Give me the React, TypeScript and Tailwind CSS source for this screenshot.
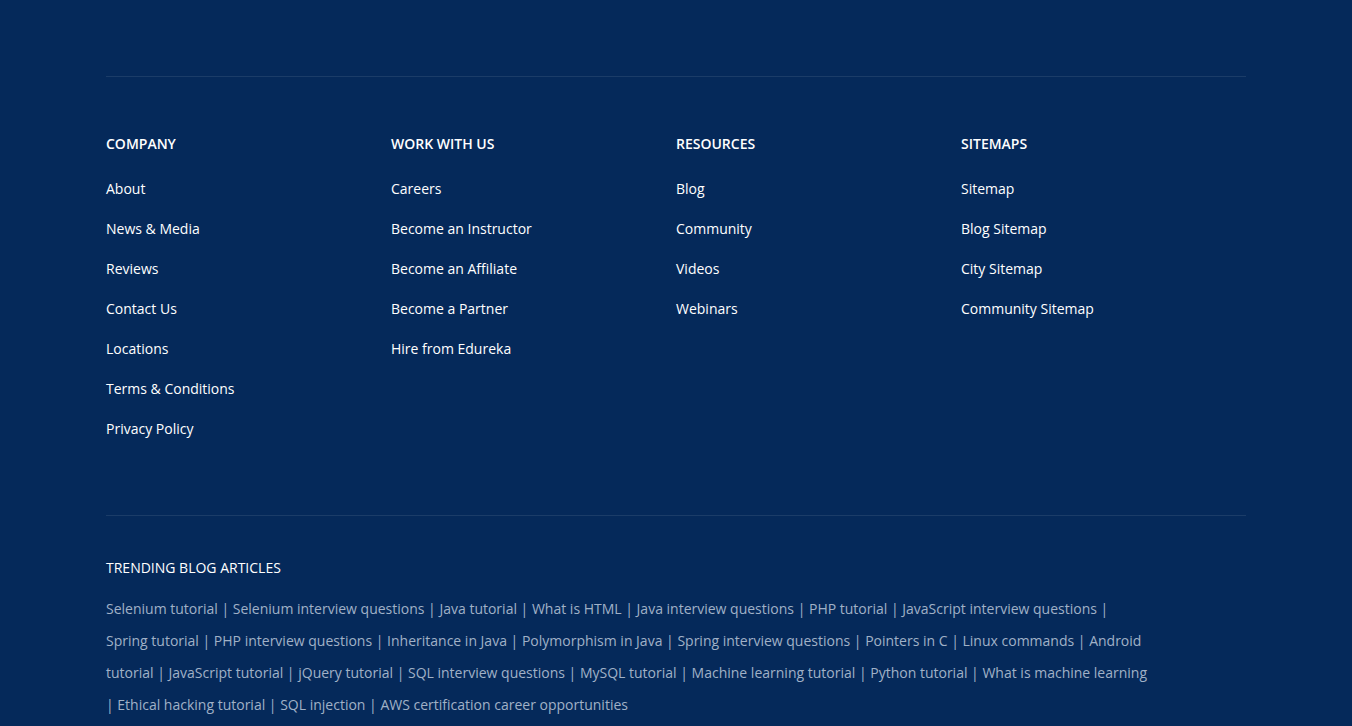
const columns = [
  {
    title: "COMPANY",
    links: ["About", "News & Media", "Reviews", "Contact Us", "Locations", "Terms & Conditions", "Privacy Policy"],
  },
  {
    title: "WORK WITH US",
    links: ["Careers", "Become an Instructor", "Become an Affiliate", "Become a Partner", "Hire from Edureka"],
  },
  {
    title: "RESOURCES",
    links: ["Blog", "Community", "Videos", "Webinars"],
  },
  {
    title: "SITEMAPS",
    links: ["Sitemap", "Blog Sitemap", "City Sitemap", "Community Sitemap"],
  },
];

const articles = [
  "Selenium tutorial",
  "Selenium interview questions",
  "Java tutorial",
  "What is HTML",
  "Java interview questions",
  "PHP tutorial",
  "JavaScript interview questions",
  "Spring tutorial",
  "PHP interview questions",
  "Inheritance in Java",
  "Polymorphism in Java",
  "Spring interview questions",
  "Pointers in C",
  "Linux commands",
  "Android tutorial",
  "JavaScript tutorial",
  "jQuery tutorial",
  "SQL interview questions",
  "MySQL tutorial",
  "Machine learning tutorial",
  "Python tutorial",
  "What is machine learning",
  "Ethical hacking tutorial",
  "SQL injection",
  "AWS certification career opportunities",
];

export default function App() {
  return (
    <footer
      className="min-h-[726px] bg-[#05295a] text-sm text-white"
      style={{ fontFamily: '"Open Sans", "Noto Sans", Arial, sans-serif' }}
    >
      <div className="mx-auto w-[1140px] pt-[76px]">
        {/* колонки ссылок */}
        <div className="grid grid-cols-4 border-t border-[#1b3c68] pt-[57px] pb-[76px]">
          {columns.map((col) => (
            <div key={col.title}>
              <h4 className="text-sm font-semibold leading-5">{col.title}</h4>
              <ul className="mt-[25px] flex flex-col gap-5">
                {col.links.map((l) => (
                  <li key={l}>
                    <a href="#" className="leading-5 text-white">
                      {l}
                    </a>
                  </li>
                ))}
              </ul>
            </div>
          ))}
        </div>

        {/* trending */}
        <div className="border-t border-[#1b3c68] pt-[42px]">
          <h5 className="text-sm leading-5 font-normal">TRENDING BLOG ARTICLES</h5>
          <p className="mt-[15px] w-[1044px] leading-8 text-[#a0b1c7]">
            {articles.map((a, i) => (
              <span key={a}>
                <a href="#">{a}</a>
                {i < articles.length - 1 ? " | " : ""}
              </span>
            ))}
          </p>
        </div>
      </div>
    </footer>
  );
}
